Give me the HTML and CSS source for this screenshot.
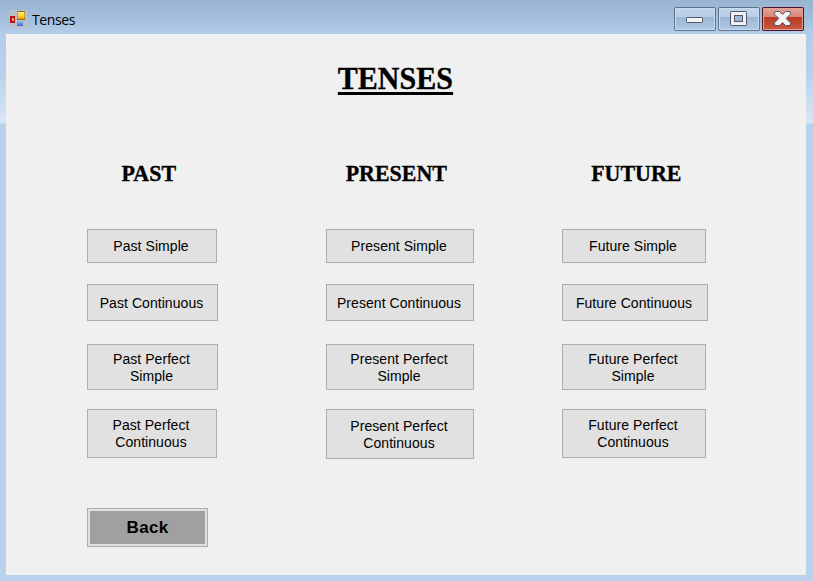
FILE: index.html
```html
<!DOCTYPE html>
<html lang="en">
<head>
<meta charset="utf-8">
<title>Tenses</title>
<link rel="stylesheet" href="styles.css">
</head>
<body>
<div class="window">
  <header class="titlebar">
    <svg class="app-icon" width="18" height="18" viewBox="0 0 18 18">
      <defs>
        <linearGradient id="gold" x2="0" y2="1"><stop stop-color="#ffe989"/><stop offset=".5" stop-color="#ffd334"/><stop offset="1" stop-color="#ee9e0a"/></linearGradient>
        <linearGradient id="blue" x2="0" y2="1"><stop stop-color="#9bbdf0"/><stop offset="1" stop-color="#2f66d0"/></linearGradient>
      </defs>
      <path d="M0 0h18v18H0z" fill="#b9bfc6"/>
      <path d="M1 6h5v7H1z" fill="#b81408"/><path d="M3 8h2v3H3z" fill="#f3a08e"/>
      <path d="M8 1h8v9H8z" fill="#8c6b18"/><path d="M8.500 2h7v7h-7z" fill="url(#gold)"/>
      <path d="M8 11h6v5H8z" fill="url(#blue)"/>
    </svg>
    <span class="caption">Tenses</span>
    <div class="controls">
      <span class="control"><svg width="42" height="24" viewBox="0 0 42 24"><rect x="12.500" y="10.500" width="16" height="5" rx=".7" fill="#f3f3f3" stroke="#535666"/></svg></span>
      <span class="control"><svg width="42" height="24" viewBox="0 0 42 24"><rect x="12.500" y="4.500" width="16" height="14" rx=".7" fill="#f0f1f3" stroke="#535666"/><rect x="16.500" y="8.500" width="8" height="6" fill="#9bb7d5" stroke="#535666"/></svg></span>
      <span class="control close"><svg width="42" height="24" viewBox="0 0 42 24"><path d="M13 4.500h4.500l3 3 3-3h4.500l.8 2.400-4.600 4.600 4.600 4.600-.8 2.400h-4.500l-3-3-3 3h-4.500l-.8-2.400 4.600-4.600-4.600-4.600z" fill="#f3f3f3" stroke="#535666" stroke-linejoin="round"/></svg></span>
    </div>
  </header>
  <main class="client">
    <h1><span>TENSES</span></h1>
    <div class="columns">
      <section class="past">
        <h2><span>PAST</span></h2>
        <button class="r1">Past Simple</button>
        <button class="r2 wide">Past Continuous</button>
        <button class="r3 wide">Past Perfect<br>Simple</button>
        <button class="r4">Past Perfect<br>Continuous</button>
      </section>
      <section class="present">
        <h2><span>PRESENT</span></h2>
        <button class="r1">Present Simple</button>
        <button class="r2">Present Continuous</button>
        <button class="r3">Present Perfect<br>Simple</button>
        <button class="r4">Present Perfect<br>Continuous</button>
      </section>
      <section class="future">
        <h2><span>FUTURE</span></h2>
        <button class="r1">Future Simple</button>
        <button class="r2 wide">Future Continuous</button>
        <button class="r3">Future Perfect<br>Simple</button>
        <button class="r4">Future Perfect<br>Continuous</button>
      </section>
    </div>
    <button class="back">Back</button>
  </main>
</div>
</body>
</html>
```
FILE: styles.css
```css
* { box-sizing: border-box; }
body { margin: 0; }
.window {
  width: 813px;
  height: 581px;
  padding: 0 7px 6px 6px;
  background: linear-gradient(#99b4d1 0, #a3bddb 18px, #b3cdea 34px, #b9d1ea 75px, #dae7f5 123px, #b9d1ea 124px);
}
.titlebar {
  display: flex;
  height: 34px;
  padding: 10px 2px 0 3px;
}
.app-icon { flex: none; }
.caption {
  margin-left: 5px;
  font: 14px/20px "Open Sans", "Noto Sans", sans-serif;
  letter-spacing: -0.4px;
}
.controls {
  display: flex;
  gap: 2px;
  margin: -3px 0 0 auto;
}
.control {
  width: 42px;
  height: 24px;
  border-radius: 2px;
  background: linear-gradient(#c3d7ed 0, #b7cee7 10px, #9ab5d3 10px, #b2cbe6 100%);
  box-shadow: inset 0 0 0 1px #5d728d, inset 0 0 0 2px #c8dcf1;
}
.control svg { display: block; }
.close {
  background: linear-gradient(#e4a99e 0, #d88475 10px, #b93a25 10px, #cb5b43 100%);
  box-shadow: inset 0 0 0 1px #4a1425, inset 0 0 0 2px #e2a397;
}
.client {
  height: 541px;
  background: #f0f0f0;
  overflow: hidden;
}
h1, h2 {
  margin: 0;
  font-family: "Liberation Serif", serif;
  font-weight: bold;
  text-align: center;
  color: #000;
  white-space: nowrap;
  -webkit-text-stroke: .35px #000;
}
h1 span, h2 span { display: inline-block; }
h1 {
  width: 779px;
  height: 40px;
  margin-top: 24px;
  font-size: 32px;
  line-height: 40px;
}
h1 span {
  height: 35px;
  line-height: 37px;
  border-bottom: 3px solid #000;
  transform: scaleX(.937);
}
.columns {
  display: flex;
  height: 302px;
  margin: 61px 0 0 81px;
}
section {
  display: flex;
  flex-direction: column;
  align-items: flex-start;
}
.past { width: 239px; }
.present { width: 236px; }
.future { width: 146px; }
h2 {
  height: 70px;
  font-size: 24px;
  line-height: 28px;
}
.past h2 { width: 124px; }
.present h2 { width: 140px; }
.future h2 { width: 148px; }
h2 span { transform: scaleX(.915); }
button {
  margin: 0;
  padding: 0 2px 0 0;
  border: 1px solid #adadad;
  background: #e1e1e1;
  color: #000;
  font: 14px/17px "Liberation Sans", Arial, sans-serif;
  letter-spacing: .06px;
}
.past button { width: 130px; }
.past .wide { width: 131px; }
.present button { width: 148px; }
.future button { width: 144px; }
.future .wide { width: 146px; }
.r1 { height: 34px; }
.r2 { height: 37px; margin-top: 21px; padding-top: 2px; }
.r3 { height: 46px; margin-top: 23px; padding-top: 1px; }
.r4 { height: 49px; margin-top: 19px; }
.present .r4 { height: 50px; padding-top: 1px; }
.back {
  display: block;
  width: 121px;
  height: 39px;
  margin: 47px 0 0 81px;
  padding: 0;
  background: #a0a0a0;
  box-shadow: inset 0 0 0 2px #e1e1e1;
  font-size: 17px;
  font-weight: bold;
  letter-spacing: .3px;
}
```
